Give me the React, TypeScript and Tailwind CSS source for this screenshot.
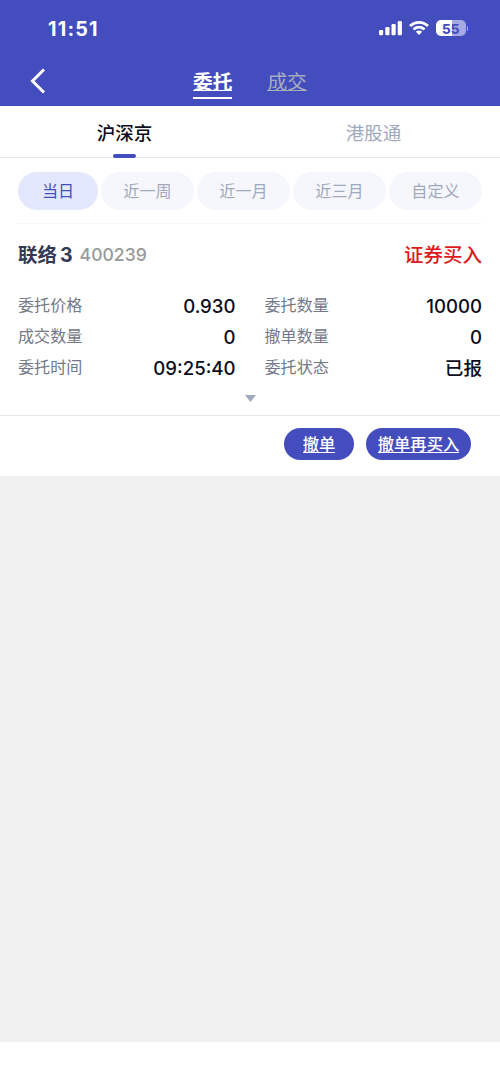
import { useState } from "react"

type Field = {
  label: string;
  value: string;
}

type Order = {
  name: string;
  suffix: string;
  code: string;
  side: string;
  left: Field[];
  right: Field[];
}

const order: Order = {
  name: "联络",
  suffix: "3",
  code: "400239",
  side: "证券买入",
  left: [
    { label: "委托价格", value: "0.930" },
    { label: "成交数量", value: "0" },
    { label: "委托时间", value: "09:25:40" },
  ],
  right: [
    { label: "委托数量", value: "10000" },
    { label: "撤单数量", value: "0" },
    { label: "委托状态", value: "已报" },
  ],
}

const markets = ["沪深京", "港股通"]
const ranges = ["当日", "近一周", "近一月", "近三月", "自定义"]

function StatusBar() {
  return (
    <div className="h-[56px] pl-12 pr-[32px] flex justify-between items-center text-white">
      <span className="pt-px text-[19.7px] leading-6 font-bold tracking-[1.2px]">11:51</span>
      <div className="flex items-center">
        <svg width="24" height="16" viewBox="0 0 24 16" fill="currentColor">
          <rect x="0" y="10" width="4.2" height="5.2" rx="1.2" />
          <rect x="6.300" y="7" width="4.2" height="8.2" rx="1.2" />
          <rect x="12.500" y="4" width="4.2" height="11.2" rx="1.2" />
          <rect x="18.700" y="1" width="4.2" height="14.2" rx="1.2" />
        </svg>
        <svg className="ml-1.5" width="20" height="16" viewBox="0 0 20 16" fill="currentColor">
          <path d="M10 1C6.3 1 2.900 2.400.4 4.800a.4.4 0 0 0 0 .6l1.400 1.400c.2.200.4.200.6 0A11 11 0 0 1 10 3.800c2.900 0 5.600 1.100 7.600 3 .2.200.4.200.6 0l1.400-1.400a.4.4 0 0 0 0-.6A13.800 13.800 0 0 0 10 1Z" />
          <path d="M10 5.800c-2.400 0-4.600.9-6.200 2.400a.4.4 0 0 0 0 .6l1.400 1.400c.2.200.4.200.6 0a6.200 6.200 0 0 1 8.400 0c.2.200.4.200.6 0l1.400-1.400a.4.4 0 0 0 0-.6A9.100 9.100 0 0 0 10 5.800Z" />
          <path d="M10 10.500c-1.100 0-2.100.4-2.900 1a.4.4 0 0 0 0 .6l2.600 2.600c.2.200.4.200.6 0l2.600-2.600a.4.4 0 0 0 0-.6c-.8-.6-1.800-1-2.900-1Z" />
        </svg>
        <div className="ml-[7px] w-[29.5px] h-4 rounded-[5px] bg-[linear-gradient(90deg,#fff_54%,#a6a9e2_54%)] flex items-center justify-center text-[#444dbe] text-[13.3px] leading-4 font-extrabold">
          <span className="pt-px">55</span>
        </div>
        <div className="ml-px w-[1.5px] h-[5px] rounded-r bg-[#a6a9e2]" />
      </div>
    </div>
  )
}

function FieldList({ fields }: { fields: Field[] }) {
  return (
    <ul className="w-[217.5px]">
      {fields.map(field => (
        <li key={field.label} className="h-[31px] flex justify-between items-center">
          <span className="text-[16.1px] leading-6 pb-0.5 text-[#737988]">{field.label}</span>
          <span className="pt-px text-[18.6px] leading-6 font-medium text-[#0b0d20]">{field.value}</span>
        </li>
      ))}
    </ul>
  )
}

export default function App() {
  const [market, setMarket] = useState(markets[0])
  const [range, setRange] = useState(ranges[0])

  return (
    <main className="h-[1082px] flex flex-col bg-white font-['Inter','Noto_Sans_CJK_SC',sans-serif]">
      <header className="h-[106px] bg-[#444dbe]">
        <StatusBar />
        <div className="h-[50px] flex items-start">
          <button className="w-[193px] pl-[30px] pt-3">
            <svg width="16" height="26" viewBox="0 0 16 26" fill="none" stroke="white" strokeWidth="3">
              <path d="M14 1.500 2.500 13 14 24.500" />
            </svg>
          </button>
          <button className="mt-[14px] h-[29px] flex items-start border-b-2 border-white">
            <span className="h-[21px] border-b border-white text-[19.7px] leading-[24px] font-bold text-white">委托</span>
          </button>
          <button className="mt-[14px] ml-[35px] h-[21px] flex items-start border-b border-[#a5adbd] text-[19.7px] leading-[24px] text-[#a5adbd]">成交</button>
        </div>
      </header>

      <nav className="h-[52px] pr-0.5 flex border-b border-[#e5e9f3]">
        {markets.map(item => (
          <button
            key={item}
            className={`flex-1 flex flex-col items-center justify-between pt-[14px] -mb-px text-[18.5px] leading-[26px] ${item === market ? "font-medium text-[#0b0d20]" : "text-[#a1a9bd]"}`}
            onClick={() => setMarket(item)}
          >
            {item}
            {item === market && <span className="w-[23px] h-1 rounded-full bg-[#444dbe]" />}
          </button>
        ))}
      </nav>

      <div className="mx-[18px] pt-[14px] h-[66px] flex gap-[3px] border-b border-[#f5f6fa]">
        {ranges.map(item => (
          <button
            key={item}
            className={`h-[38px] rounded-full text-[16.1px] leading-6 ${item === ranges[0] ? "w-[80px]" : "flex-1"} ${item === range ? "bg-[#e4e8ff] text-[#444dbe]" : "bg-[#f6f7fc] text-[#a1a9bd]"}`}
            onClick={() => setRange(item)}
          >
            {item}
          </button>
        ))}
      </div>

      <section className="h-[192px] px-[18px] border-b border-[#e6e6e8]">
        <div className="h-[66px] pb-[5px] flex items-center">
          <h2 className="text-[19.5px] leading-7 font-bold text-[#343956] flex gap-[3px]">
            <span>{order.name}</span>
            <span>{order.suffix}</span>
          </h2>
          <span className="ml-[7px] text-[17.6px] leading-7 font-medium text-[#999]">{order.code}</span>
          <span className="ml-auto text-[19.5px] leading-7 font-medium text-[#dc1b1b]">{order.side}</span>
        </div>
        <div className="flex justify-between">
          <FieldList fields={order.left} />
          <FieldList fields={order.right} />
        </div>
        <svg className="mx-auto mt-3" width="11" height="7" viewBox="0 0 11 7" fill="#a1a9bd">
          <path d="M0 0h11L5.500 7Z" />
        </svg>
      </section>

      <div className="h-[60px] pr-[29px] pt-3 flex justify-end gap-3 text-[16.3px] leading-[22px] font-medium text-white">
        <button className="w-[70px] h-8 rounded-full bg-[#444dbe] flex justify-center items-start pt-[5px]">
          <span className="h-5 border-b border-white">撤单</span>
        </button>
        <button className="w-[105px] h-8 rounded-full bg-[#444dbe] flex justify-center items-start pt-[5px]">
          <span className="h-5 border-b border-white">撤单再买入</span>
        </button>
      </div>

      <div className="h-[566px] bg-[#f1f1f1]" />
    </main>
  )
}
